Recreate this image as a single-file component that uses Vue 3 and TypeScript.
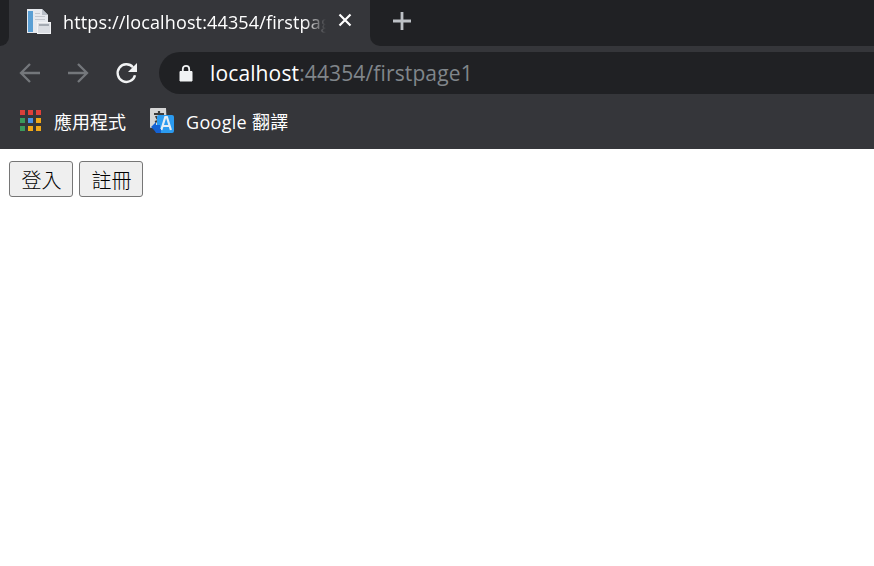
<script setup lang="ts">
const appColors: string[] = [
  '#d9403a', '#e0403a', '#e0403a',
  '#3a9a5c', '#4a90e2', '#f0a818',
  '#3a9a5c', '#f0a818', '#f0a818',
]
</script>

<template>
  <div class="page">
    <header class="chrome">
      <div class="tabstrip">
        <div class="strip-lead"></div>
        <div class="tab">
          <svg class="favicon" width="26" height="26" viewBox="0 0 26 26">
            <path d="M2 1h15l6 6v18H2z" fill="#e6e9ee" />
            <path d="M17 1l6 6h-6z" fill="#b9bfc8" />
            <rect x="3" y="3" width="5" height="21" fill="#5a9fd4" />
            <rect x="10" y="5" width="5" height="1" fill="#c4c8cf" />
            <rect x="10" y="8" width="10" height="1" fill="#c4c8cf" />
            <rect x="10" y="11" width="10" height="1" fill="#c4c8cf" />
            <rect x="12.500" y="14.500" width="13" height="11" fill="#dadde2" stroke="#f2f3f5" />
            <rect x="14" y="16" width="10" height="2" fill="#a4aab2" />
          </svg>
          <span class="tab-title">https://localhost:44354/firstpage1</span>
          <svg class="tab-close" width="14" height="14" viewBox="0 0 14 14">
            <path d="M1.500 1.500l11 11M12.500 1.500l-11 11" stroke="#fff" stroke-width="2.200" />
          </svg>
        </div>
        <div class="strip-rest">
          <svg width="20" height="20" viewBox="0 0 20 20">
            <path d="M10 1v18M1 10h18" stroke="#bdc1c6" stroke-width="2.800" />
          </svg>
        </div>
      </div>

      <div class="toolbar">
        <svg class="nav nav-back" width="24" height="24" viewBox="0 0 24 24">
          <path d="M22 12H3M12 3l-9 9 9 9" fill="none" stroke="#74777b" stroke-width="2.300" />
        </svg>
        <svg class="nav nav-forward" width="24" height="24" viewBox="0 0 24 24">
          <path d="M2 12h19M12 3l9 9-9 9" fill="none" stroke="#74777b" stroke-width="2.300" />
        </svg>
        <svg class="nav nav-reload" width="24" height="24" viewBox="0 0 24 24">
          <path d="M20 14.200A8.800 8.800 0 1 1 18 6.200" fill="none" stroke="#f1f3f4" stroke-width="2.400" />
          <path d="M22 2v9h-9z" fill="#f1f3f4" />
        </svg>
        <div class="omnibox">
          <svg class="lock" width="14" height="18" viewBox="0 0 14 18">
            <path d="M1 7.500h12V17H1z" fill="#f1f3f4" stroke="#f1f3f4" stroke-linejoin="round" />
            <path d="M3.800 8V5a3.200 3.200 0 0 1 6.400 0v3" fill="none" stroke="#f1f3f4" stroke-width="1.800" />
          </svg>
          <span class="url"><span class="host">localhost</span><span class="path">:44354/firstpage1</span></span>
        </div>
      </div>

      <div class="bookmarks">
        <div class="bookmark bookmark-apps">
          <div class="apps-grid">
            <i v-for="(c, i) in appColors" :key="i" :style="{ background: c }"></i>
          </div>
          <span>應用程式</span>
        </div>
        <div class="bookmark bookmark-translate">
          <svg width="26" height="26" viewBox="0 0 26 26">
            <path d="M0 1a1 1 0 0 1 1-1h15l1 20H1a1 1 0 0 1-1-1z" fill="#d6d6d6" />
            <path d="M4 6h10M9 3v4M5 14c4-1 7-4 8-7M6 8c1 3 3 5 7 6" fill="none" stroke="#3c3c3c" stroke-width="2.200" />
            <rect x="7" y="7" width="17" height="18" rx="2" fill="#2b9bf0" />
            <path d="M11.300 22l4-13h1.600l4 13M13 18h6.400" fill="none" stroke="#e4edf4" stroke-width="2.200" />
            <path d="M1 19l5-5v3h4v4H6v3L3 21z" fill="#1462d4" />
            <path d="M4 21h7v4H6z" fill="#1462d4" />
          </svg>
          <span class="translate-label">Google 翻譯</span>
        </div>
      </div>
    </header>

    <main class="content">
      <button type="button" class="action">登入</button>
      <button type="button" class="action">註冊</button>
    </main>
  </div>
</template>

<style scoped>
.page {
  width: 874px;
  height: 566px;
  overflow: hidden;
  background: #fff;
}
.chrome {
  background: #35363a;
  font-family: "Open Sans", "Noto Sans CJK TC", sans-serif;
  color: #fff;
  height: 149px;
}
.tabstrip {
  display: flex;
  height: 46px;
}
.strip-lead {
  width: 9px;
  background: #202124;
  border-bottom-right-radius: 10px;
}
.tab {
  width: 361px;
  display: flex;
  align-items: center;
}
.favicon {
  margin-left: 16px;
  margin-top: -5px;
  flex: none;
}
.tab-title {
  margin-left: 12px;
  width: 263px;
  overflow: hidden;
  white-space: nowrap;
  font-size: 18px;
  letter-spacing: 0.14px;
  margin-top: -2px;
  -webkit-mask-image: linear-gradient(to right, #000 92%, transparent);
  mask-image: linear-gradient(to right, #000 92%, transparent);
}
.tab-close {
  margin-left: 12px;
  margin-top: -6px;
  flex: none;
}
.strip-rest {
  flex: 1;
  background: #202124;
  border-bottom-left-radius: 10px;
  display: flex;
  align-items: center;
  padding-left: 22px;
  padding-bottom: 5px;
}
.toolbar {
  display: flex;
  align-items: center;
  height: 54px;
  padding-left: 18px;
}
.nav {
  flex: none;
}
.nav-forward {
  margin-left: 24px;
}
.nav-reload {
  margin-left: 25px;
  margin-top: -1px;
}
.omnibox {
  margin-left: 20px;
  flex: 1;
  height: 42px;
  margin-right: -30px;
  border-radius: 21px;
  background: #202124;
  display: flex;
  align-items: center;
  padding-left: 20px;
}
.lock {
  flex: none;
}
.url {
  margin-left: 17px;
  font-size: 21px;
  white-space: nowrap;
  letter-spacing: 0.13px;
}
.host {
  color: #fff;
}
.path {
  color: #80868b;
}
.bookmarks {
  display: flex;
  align-items: center;
  height: 49px;
  padding-left: 20px;
  padding-bottom: 8px;
  box-sizing: border-box;
  font-size: 18px;
}
.bookmark {
  display: flex;
  align-items: center;
}
.bookmark-apps {
  gap: 13px;
}
.bookmark-translate {
  margin-left: 24px;
  gap: 10px;
}
.translate-label {
  letter-spacing: 0.3px;
}
.apps-grid {
  display: grid;
  grid-template-columns: repeat(3, 5px);
  grid-auto-rows: 5px;
  gap: 3px;
}
.content {
  display: flex;
  gap: 6px;
  padding: 12px 9px;
}
.action {
  width: 64px;
  height: 36px;
  padding: 0 0 0 1px;
  font-family: "Noto Sans CJK TC", sans-serif;
  font-size: 20px;
  font-weight: 300;
  color: #000;
  background: #efefef;
  border: 1px solid #767676;
  border-radius: 3px;
}
</style>
